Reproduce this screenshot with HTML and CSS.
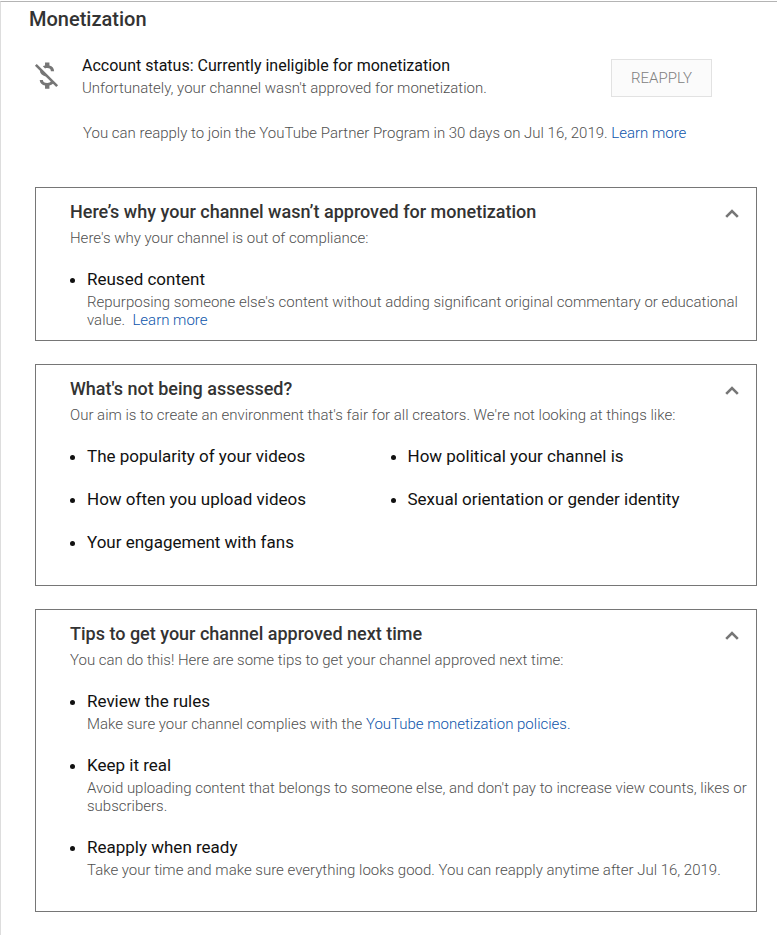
FILE: index.html
```html
<!DOCTYPE html>
<html lang="en">
<head>
    <meta charset="UTF-8">
    <meta name="viewport" content="width=device-width, initial-scale=1.0">
    <title>Monetization</title>
    <link rel="stylesheet" href="styles.css">
</head>
<body>
    <main class="page">
        <h1>Monetization</h1>

        <div class="status">
            <svg class="status-icon" viewBox="0 0 24 24" aria-hidden="true">
                <path d="M12.5 6.9c1.78 0 2.44.85 2.5 2.1h2.21c-.07-1.72-1.12-3.3-3.21-3.81V3h-3v2.16c-.53.12-1.03.3-1.48.54l1.47 1.47c.41-.17.91-.27 1.51-.27zM5.33 4.06L4.06 5.33 7.5 8.77c0 2.08 1.56 3.21 3.91 3.91l3.51 3.51c-.34.48-1.05.91-2.42.91-2.06 0-2.87-.92-2.98-2.1h-2.2c.12 2.19 1.76 3.42 3.68 3.83V21h3v-2.15c.96-.18 1.82-.55 2.45-1.12l2.22 2.22 1.27-1.27L5.33 4.06z"/>
            </svg>
            <div class="status-text">
                <h2>Account status: Currently ineligible for monetization</h2>
                <p>Unfortunately, your channel wasn't approved for monetization.</p>
            </div>
            <button class="reapply" type="button" disabled>REAPPLY</button>
        </div>
        <p class="notice">You can reapply to join the YouTube Partner Program in 30 days on Jul 16, 2019. <a href="#">Learn more</a></p>

        <section class="card">
            <div class="card-head">
                <h2>Here’s why your channel wasn’t approved for monetization</h2>
                <button class="toggle" type="button" aria-label="Collapse" aria-expanded="true">
                    <svg viewBox="0 0 24 24"><path d="M6.2 16.8L12 11l5.8 5.8"/></svg>
                </button>
            </div>
            <p>Here's why your channel is out of compliance:</p>
            <ul class="list">
                <li>
                    <h3>Reused content</h3>
                    <p>Repurposing someone else's content without adding significant original commentary or educational value.&nbsp; <a href="#">Learn more</a></p>
                </li>
            </ul>
        </section>

        <section class="card">
            <div class="card-head">
                <h2>What's not being assessed?</h2>
                <button class="toggle" type="button" aria-label="Collapse" aria-expanded="true">
                    <svg viewBox="0 0 24 24"><path d="M6.2 16.8L12 11l5.8 5.8"/></svg>
                </button>
            </div>
            <p>Our aim is to create an environment that's fair for all creators. We're not looking at things like:</p>
            <ul class="list spaced two-col">
                <li>The popularity of your videos</li>
                <li>How political your channel is</li>
                <li>How often you upload videos</li>
                <li>Sexual orientation or gender identity</li>
                <li>Your engagement with fans</li>
            </ul>
        </section>

        <section class="card">
            <div class="card-head">
                <h2>Tips to get your channel approved next time</h2>
                <button class="toggle" type="button" aria-label="Collapse" aria-expanded="true">
                    <svg viewBox="0 0 24 24"><path d="M6.2 16.8L12 11l5.8 5.8"/></svg>
                </button>
            </div>
            <p>You can do this! Here are some tips to get your channel approved next time:</p>
            <ul class="list spaced">
                <li>
                    <h3>Review the rules</h3>
                    <p>Make sure your channel complies with the <a href="#">YouTube monetization policies.</a></p>
                </li>
                <li>
                    <h3>Keep it real</h3>
                    <p>Avoid uploading content that belongs to someone else, and don't pay to increase view counts, likes or subscribers.</p>
                </li>
                <li>
                    <h3>Reapply when ready</h3>
                    <p>Take your time and make sure everything looks good. You can reapply anytime after Jul 16, 2019.</p>
                </li>
            </ul>
        </section>
    </main>
</body>
</html>
```
FILE: styles.css
```css
* { box-sizing: border-box; }
body { margin: 0; padding-top: 1px; background: #fff; color: #111; font-family: Roboto, Arial, sans-serif; font-size: 15px; line-height: 18px; }
h1, h2, h3, p, ul { margin: 0; padding: 0; }
p { color: #505050; font-weight: 300; }
a { color: #0d55ab; text-decoration: none; }
a:hover { text-decoration: underline; }

.page { min-height: calc(100vh - 1px); padding: 5px 20px 22px 34px; border-top: 1px solid #b4b4b4; border-left: 1px solid #ddd; }
h1 { margin-left: -6px; font-size: 20px; font-weight: 500; line-height: 24px; color: #333; }

/* Account status */
.status { display: flex; align-items: center; margin-top: 23px; }
.status-icon { flex: none; width: 35px; height: 35px; margin: 0 18px 0 -6px; fill: #767676; }
.status-text { flex: 1; }
.status-text h2 { font-size: 16px; font-weight: 400; line-height: 24px; }
.status-text p { margin-top: 1px; }
.reapply { align-self: flex-end; width: 101px; height: 38px; margin-right: 45px; border: 1px solid #e2e2e2; background: #fbfbfb; color: #808080; font-family: inherit; font-size: 15px; font-weight: 300; }
.notice { margin: 27px 0 45px 48px; }

/* Cards */
.card { margin-bottom: 23px; padding: 12px 4px 11px 34px; border: 1px solid #767676; }
.card-head { display: flex; justify-content: space-between; align-items: center; margin-bottom: 5px; padding-right: 8px; }
.card-head h2 { font-size: 18px; font-weight: 500; line-height: 24px; color: #333; }
.toggle { width: 24px; height: 24px; padding: 0; border: 0; background: none; cursor: pointer; }
.toggle svg { display: block; width: 24px; height: 24px; fill: none; stroke: #767676; stroke-width: 2.6; }

.list { margin-top: 20px; padding-left: 17px; font-size: 17px; line-height: 24px; }
.list h3 { font-size: 17px; font-weight: 400; line-height: 24px; }
.list p { margin-top: 2px; font-size: 15px; line-height: 18px; }
.spaced { padding-bottom: 1px; }
.spaced li { margin-bottom: 20px; }
.two-col { display: grid; grid-template-columns: 1fr 1fr; padding-right: 24px; }
.two-col li { margin-bottom: 19px; }
```
